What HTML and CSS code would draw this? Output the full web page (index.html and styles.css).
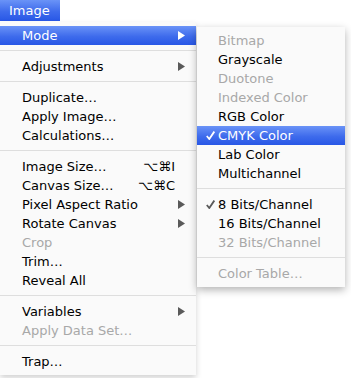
FILE: index.html
```html
<!DOCTYPE html>
<html>
<head>
<meta charset="utf-8">
<link rel="stylesheet" href="styles.css">
</head>
<body>
<div class="menubar"><span class="title">Image</span></div>
<div class="stage">
  <div class="menu main">
    <div class="item sel">Mode<svg class="arrow" viewBox="0 0 7 9"><polygon points="0,0 7,4.5 0,9"/></svg></div>
    <div class="sep"></div>
    <div class="item">Adjustments<svg class="arrow" viewBox="0 0 7 9"><polygon points="0,0 7,4.5 0,9"/></svg></div>
    <div class="sep"></div>
    <div class="item">Duplicate…</div>
    <div class="item">Apply Image…</div>
    <div class="item">Calculations…</div>
    <div class="sep"></div>
    <div class="item">Image Size…<span class="key">⌥⌘I</span></div>
    <div class="item">Canvas Size…<span class="key">⌥⌘C</span></div>
    <div class="item">Pixel Aspect Ratio<svg class="arrow" viewBox="0 0 7 9"><polygon points="0,0 7,4.5 0,9"/></svg></div>
    <div class="item">Rotate Canvas<svg class="arrow" viewBox="0 0 7 9"><polygon points="0,0 7,4.5 0,9"/></svg></div>
    <div class="item dis">Crop</div>
    <div class="item">Trim…</div>
    <div class="item">Reveal All</div>
    <div class="sep"></div>
    <div class="item">Variables<svg class="arrow" viewBox="0 0 7 9"><polygon points="0,0 7,4.5 0,9"/></svg></div>
    <div class="item dis">Apply Data Set…</div>
    <div class="sep"></div>
    <div class="item">Trap…</div>
  </div>
  <div class="menu sub">
    <div class="item dis">Bitmap</div>
    <div class="item">Grayscale</div>
    <div class="item dis">Duotone</div>
    <div class="item dis">Indexed Color</div>
    <div class="item">RGB Color</div>
    <div class="item sel"><svg class="check" viewBox="0 0 9 9"><path d="M0.8 5 L3.3 8 L8.3 0.6"/></svg>CMYK Color</div>
    <div class="item">Lab Color</div>
    <div class="item">Multichannel</div>
    <div class="sep"></div>
    <div class="item"><svg class="check" viewBox="0 0 9 9"><path d="M0.8 5 L3.3 8 L8.3 0.6"/></svg>8 Bits/Channel</div>
    <div class="item">16 Bits/Channel</div>
    <div class="item dis">32 Bits/Channel</div>
    <div class="sep"></div>
    <div class="item dis">Color Table…</div>
  </div>
</div>
</body>
</html>
```
FILE: styles.css
```css
html, body {
  margin: 0;
  padding: 0;
  background: #ffffff;
}
body {
  width: 351px;
  height: 378px;
  overflow: hidden;
  font-family: "DejaVu Sans", sans-serif;
  font-size: 13px;
  color: #000;
}
.menubar {
  height: 21px;
}
.title {
  display: inline-block;
  width: 60px;
  height: 21px;
  line-height: 21px;
  padding-left: 9px;
  box-sizing: border-box;
  color: #fff;
  background: linear-gradient(to bottom, #6a93f7 0%, #3e6bec 55%, #2857e6 100%);
}
.stage {
  display: flex;
  align-items: flex-start;
}
.menu {
  background: #fafafa;
  padding: 4px 0;
  position: relative;
}
.main {
  width: 196px;
  margin-top: 1px;
  box-shadow: 0 3px 6px rgba(0,0,0,0.18);
  z-index: 1;
}
.sub {
  width: 148px;
  margin-left: 1px;
  margin-top: 6px;
  box-shadow: 0 3px 8px rgba(0,0,0,0.3);
  z-index: 2;
}
.item {
  height: 19px;
  line-height: 19px;
  padding-left: 22px;
  display: flex;
  align-items: center;
  white-space: nowrap;
  position: relative;
}
.sub .item {
  padding-left: 21px;
}
.item.dis {
  color: #a8a8a8;
}
.item.sel {
  color: #fff;
  background: linear-gradient(to bottom, #6a93f7 0%, #3e6bec 55%, #2857e6 100%);
}
.sep {
  height: 12px;
  position: relative;
}
.sep::after {
  content: "";
  position: absolute;
  left: 0;
  right: 0;
  top: 5px;
  height: 1px;
  background: #dedede;
}
.arrow {
  width: 7px;
  height: 9px;
  margin-left: auto;
  margin-right: 11px;
  fill: #5a5a5a;
}
.sel .arrow {
  fill: #fff;
}
.key {
  margin-left: auto;
  margin-right: 21px;
}
.check {
  position: absolute;
  left: 9px;
  top: 5px;
  width: 9px;
  height: 9px;
  fill: none;
  stroke: #5a5a5a;
  stroke-width: 1.8;
}
.sel .check {
  stroke: #fff;
}
```
